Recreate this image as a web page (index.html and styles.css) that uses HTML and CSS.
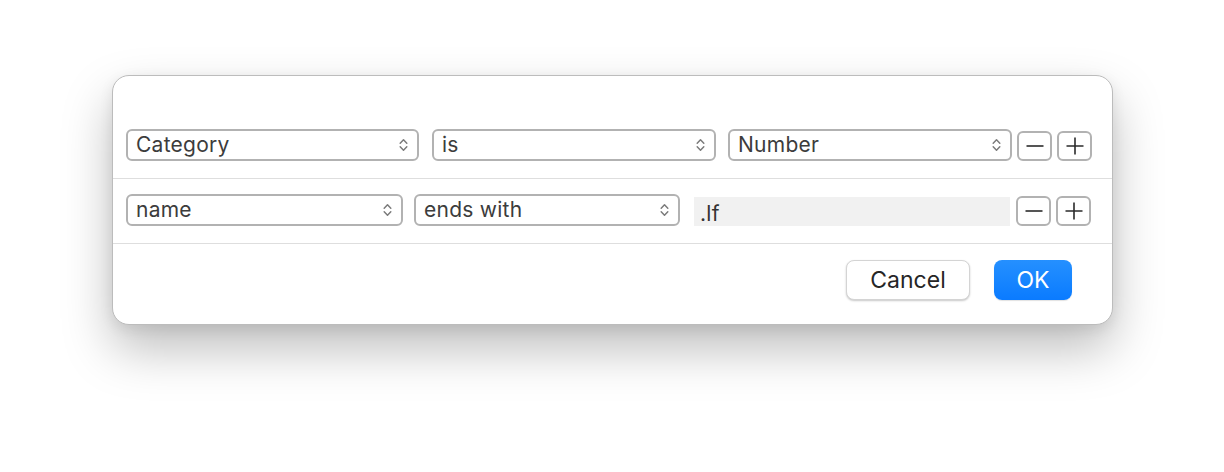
FILE: index.html
```html
<!DOCTYPE html>
<html>
<head>
<meta charset="utf-8">
<link rel="stylesheet" href="styles.css">
</head>
<body>
<div class="stage">
  <div class="dialog">
    <div class="head"></div>
    <div class="row row1">
      <div class="popup w-category"><span class="label">Category</span><svg class="chev" viewBox="0 0 9 14" width="9" height="14"><path d="M1.2 5.2 L4.5 1.8 L7.8 5.2 M1.2 8.8 L4.5 12.2 L7.8 8.8" fill="none" stroke="#7b7b7b" stroke-width="1.5" stroke-linecap="round" stroke-linejoin="round"/></svg></div>
      <div class="popup w-is"><span class="label">is</span><svg class="chev" viewBox="0 0 9 14" width="9" height="14"><path d="M1.2 5.2 L4.5 1.8 L7.8 5.2 M1.2 8.8 L4.5 12.2 L7.8 8.8" fill="none" stroke="#7b7b7b" stroke-width="1.5" stroke-linecap="round" stroke-linejoin="round"/></svg></div>
      <div class="popup w-number"><span class="label">Number</span><svg class="chev" viewBox="0 0 9 14" width="9" height="14"><path d="M1.2 5.2 L4.5 1.8 L7.8 5.2 M1.2 8.8 L4.5 12.2 L7.8 8.8" fill="none" stroke="#7b7b7b" stroke-width="1.5" stroke-linecap="round" stroke-linejoin="round"/></svg></div>
      <div class="btns">
        <div class="sq"><svg viewBox="0 0 20 20" width="20" height="20"><path d="M1.5 10 H18.5" stroke="#2b2b2b" stroke-width="1.6"/></svg></div>
        <div class="sq"><svg viewBox="0 0 20 20" width="20" height="20"><path d="M1.5 10 H18.5 M10 1.5 V18.5" stroke="#2b2b2b" stroke-width="1.6"/></svg></div>
      </div>
    </div>
    <div class="sep"></div>
    <div class="row row2">
      <div class="popup w-name"><span class="label">name</span><svg class="chev" viewBox="0 0 9 14" width="9" height="14"><path d="M1.2 5.2 L4.5 1.8 L7.8 5.2 M1.2 8.8 L4.5 12.2 L7.8 8.8" fill="none" stroke="#7b7b7b" stroke-width="1.5" stroke-linecap="round" stroke-linejoin="round"/></svg></div>
      <div class="popup w-ends"><span class="label">ends with</span><svg class="chev" viewBox="0 0 9 14" width="9" height="14"><path d="M1.2 5.2 L4.5 1.8 L7.8 5.2 M1.2 8.8 L4.5 12.2 L7.8 8.8" fill="none" stroke="#7b7b7b" stroke-width="1.5" stroke-linecap="round" stroke-linejoin="round"/></svg></div>
      <div class="field">.lf</div>
      <div class="btns">
        <div class="sq"><svg viewBox="0 0 20 20" width="20" height="20"><path d="M1.5 10 H18.5" stroke="#2b2b2b" stroke-width="1.6"/></svg></div>
        <div class="sq"><svg viewBox="0 0 20 20" width="20" height="20"><path d="M1.5 10 H18.5 M10 1.5 V18.5" stroke="#2b2b2b" stroke-width="1.6"/></svg></div>
      </div>
    </div>
    <div class="sep"></div>
    <div class="footer">
      <div class="btn cancel">Cancel</div>
      <div class="btn ok">OK</div>
    </div>
  </div>
</div>
</body>
</html>
```
FILE: styles.css
```css
html, body {
  margin: 0;
  padding: 0;
  background: #ffffff;
}
body {
  font-family: Inter, "Liberation Sans", sans-serif;
  width: 1224px;
  height: 472px;
  overflow: hidden;
}
.stage {
  padding: 75px 0 0 112px;
}
.dialog {
  box-sizing: border-box;
  width: 1001px;
  height: 250px;
  background: #ffffff;
  border: 1px solid #bcbcbc;
  border-radius: 17px;
  box-shadow: 0 24px 50px rgba(0, 0, 0, 0.26), 0 4px 14px rgba(0, 0, 0, 0.08);
  display: flex;
  flex-direction: column;
}
.head {
  height: 53px;
}
.row {
  display: flex;
  align-items: center;
  padding-left: 13px;
}
.row1 {
  height: 32px;
}
.row2 {
  height: 32px;
  margin-top: 15px;
}
.sep {
  height: 1px;
  background: #dedede;
  margin-top: 17px;
}
.popup {
  box-sizing: border-box;
  height: 32px;
  border: 2px solid #b2b2b2;
  border-radius: 6px;
  display: flex;
  align-items: center;
  justify-content: space-between;
  padding: 0 9px 0 8px;
  color: #3c3c3c;
  font-size: 21px;
  letter-spacing: 0.25px;
  flex: none;
}
.label {
  line-height: 1;
  margin-top: -2px;
}
.chev {
  display: block;
}
.w-category { width: 293px; margin-right: 13px; }
.w-is { width: 284px; margin-right: 12px; }
.w-number { width: 284px; }
.w-name { width: 277px; margin-right: 11px; }
.w-ends { width: 266px; margin-right: 14px; }
.field {
  box-sizing: border-box;
  width: 316px;
  height: 29px;
  margin-top: 3px;
  background: #f1f1f1;
  color: #333333;
  font-size: 21px;
  letter-spacing: 0.25px;
  display: flex;
  align-items: center;
  padding-left: 6px;
  padding-top: 4px;
  flex: none;
}
.btns {
  display: flex;
  gap: 5px;
  margin-left: 5px;
  margin-top: 2px;
}
.row2 .btns {
  margin-left: 6px;
}
.sq {
  box-sizing: border-box;
  width: 35px;
  height: 30px;
  border: 2px solid #b2b2b2;
  border-radius: 6px;
  display: flex;
  align-items: center;
  justify-content: center;
}
.sq svg {
  display: block;
}
.footer {
  display: flex;
  justify-content: flex-end;
  padding: 16px 40px 0 0;
  gap: 24px;
}
.btn {
  box-sizing: border-box;
  height: 40px;
  border-radius: 8px;
  display: flex;
  align-items: center;
  justify-content: center;
  font-size: 23px;
}
.cancel {
  width: 124px;
  background: #ffffff;
  color: #262626;
  border: 0.5px solid #d4d4d4;
  box-shadow: 0 1px 2px rgba(0, 0, 0, 0.22);
}
.ok {
  width: 78px;
  color: #ffffff;
  background: linear-gradient(#2590ff, #0a7bff);
  box-shadow: 0 1px 1px rgba(0, 0, 0, 0.12);
}
```
